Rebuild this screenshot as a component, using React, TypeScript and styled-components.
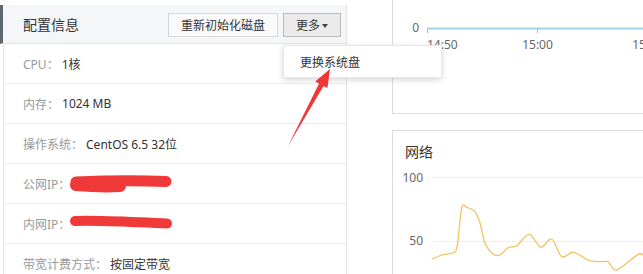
import React, {ReactElement} from 'react';
import styled, {createGlobalStyle} from 'styled-components';

const GlobalStyle = createGlobalStyle`
    html, body {
        margin: 0;
        padding: 0;
        background: #fff;
        overflow: hidden;
    }
    body {
        font-family: "Noto Sans", "Noto Sans CJK SC", sans-serif;
        font-size: 12px;
        color: #333;
    }
`;

const infoRows = [
    {label: 'CPU', value: '1核'},
    {label: '内存', value: '1024 MB'},
    {label: '操作系统', value: 'CentOS 6.5 32位'},
    {label: '公网IP', value: null, scribble: 'thick'},
    {label: '内网IP', value: null, scribble: 'thin'},
    {label: '带宽计费方式', value: '按固定带宽'},
];

// network chart, svg coords relative to chart origin
const netPoints: [number, number][] = [
    [38.7, 97.3], [48.7, 93], [60, 90.7], [64, 84.7], [68.7, 46.3],
    [73.7, 45.3], [82, 49.7], [87, 61], [92, 81], [100, 92], [107, 93],
    [115, 85.7], [123.7, 83.7], [136.3, 72.3], [147.7, 85.3], [158.7, 77],
    [168.7, 94.7], [180.3, 90.3], [197, 98.7], [210.3, 99.7], [215.3, 99.7],
    [223.7, 108], [245.3, 92.3], [252, 95],
];

function smoothPath(pts: [number, number][]): string {
    let d = `M${pts[0][0]},${pts[0][1]}`;
    for (let i = 0; i < pts.length - 1; i++) {
        const p0 = pts[i - 1] || pts[i];
        const p1 = pts[i];
        const p2 = pts[i + 1];
        const p3 = pts[i + 2] || p2;
        const c1x = p1[0] + (p2[0] - p0[0]) / 6;
        const c1y = p1[1] + (p2[1] - p0[1]) / 6;
        const c2x = p2[0] - (p3[0] - p1[0]) / 6;
        const c2y = p2[1] - (p3[1] - p1[1]) / 6;
        d += ` C${c1x.toFixed(1)},${c1y.toFixed(1)} ${c2x.toFixed(1)},${c2y.toFixed(1)} ${p2[0]},${p2[1]}`;
    }
    return d;
}

function Scribble({kind}: {kind: string}): ReactElement {
    return (
        <ScribbleSvg width="106" height="20" viewBox="0 0 106 20">
            {kind === 'thick' ? (
                <>
                    <path d="M8,8 C30,7 60,6 98,7.5" stroke="#f03a3a" strokeWidth="11" strokeLinecap="round" fill="none" />
                    <path d="M8,11 C20,12 35,13 52,12" stroke="#f03a3a" strokeWidth="12" strokeLinecap="round" fill="none" />
                </>
            ) : (
                <path d="M7,7 C30,6 60,8 99,9.5" stroke="#f03a3a" strokeWidth="10" strokeLinecap="round" fill="none" />
            )}
        </ScribbleSvg>
    );
}

export default function App(): ReactElement {
    return (
        <Page>
            <GlobalStyle />
            <ConfigPanel>
                <PanelHeader>
                    <PanelTitle>配置信息</PanelTitle>
                    <Actions>
                        <Button>重新初始化磁盘</Button>
                        <MenuWrap>
                            <Button $active>
                                更多<Caret />
                            </Button>
                            <Menu>
                                <MenuItem>更换系统盘</MenuItem>
                            </Menu>
                        </MenuWrap>
                    </Actions>
                </PanelHeader>
                <PanelBody>
                    {infoRows.map((row) => (
                        <InfoRow key={row.label}>
                            <Label>{row.label}：</Label>
                            {row.value ? <Value>{row.value}</Value> : <Scribble kind={row.scribble || ''} />}
                        </InfoRow>
                    ))}
                </PanelBody>
            </ConfigPanel>

            <ChartColumn>
                <CpuCard>
                    <svg width="250" height="113" viewBox="0 0 250 113">
                        <text x="26" y="32" textAnchor="end" fontSize="12" fill="#666">0</text>
                        <line x1="34" y1="28.5" x2="250" y2="28.5" stroke="#9dd5e4" strokeWidth="2" />
                        <line x1="34.5" y1="28" x2="34.5" y2="33" stroke="#bbb" />
                        <line x1="144.5" y1="28" x2="144.5" y2="33" stroke="#bbb" />
                        <text x="34" y="49" fontSize="12" fill="#666">14:50</text>
                        <text x="144.5" y="49" textAnchor="middle" fontSize="12" fill="#666">15:00</text>
                        <text x="254.5" y="49" textAnchor="middle" fontSize="12" fill="#666">15:10</text>
                    </svg>
                </CpuCard>
                <NetCard>
                    <CardTitle>网络</CardTitle>
                    <svg width="250" height="112" viewBox="0 0 250 112">
                        <text x="30" y="19.5" textAnchor="end" fontSize="12" fill="#666">100</text>
                        <line x1="39" y1="15.5" x2="250" y2="15.5" stroke="#eee" />
                        <text x="30" y="83" textAnchor="end" fontSize="12" fill="#666">50</text>
                        <line x1="39" y1="79.5" x2="250" y2="79.5" stroke="#eee" />
                        <path d={smoothPath(netPoints)} stroke="#f2c360" strokeWidth="1.3" fill="none" />
                    </svg>
                </NetCard>
            </ChartColumn>

            <Arrow width="60" height="90" viewBox="280 62 60 90">
                <polygon points="330,69 315.2,81.4 319.1,83.5 288,146 323.5,86 327.4,88.1" fill="#f23535" />
            </Arrow>
        </Page>
    );
}

const Page = styled.div`
    position: relative;
    display: flex;
    flex-flow: row nowrap;
    align-items: flex-start;
    width: 643px;
    height: 274px;
    overflow: hidden;
`;

const ConfigPanel = styled.section`
    width: 347px;
    flex: none;
    margin-top: 5px;
`;

const PanelHeader = styled.header`
    box-sizing: border-box;
    display: flex;
    align-items: center;
    justify-content: space-between;
    height: 39px;
    padding: 2px 5px 0 20px;
    background: #f5f6f7;
    border-left: 3px solid #5e6771;
    border-right: 1px solid #e4e4e4;
    border-bottom: 1px solid #e4e4e4;
`;

const PanelTitle = styled.h3`
    margin: 0;
    font-size: 14px;
    font-weight: normal;
    color: #333;
    line-height: 20px;
`;

const Actions = styled.div`
    display: flex;
    gap: 5px;
`;

const MenuWrap = styled.div`
    position: relative;
`;

const Button = styled.button<{$active?: boolean}>`
    box-sizing: border-box;
    display: flex;
    align-items: center;
    height: 24px;
    padding: 0 12px;
    font-family: inherit;
    font-size: 12px;
    color: #333;
    background: ${({$active}) => ($active ? '#ebebeb' : '#fafafa')};
    border: 1px solid ${({$active}) => ($active ? '#b9b9b9' : '#d6d6d6')};
    border-radius: 0;
    cursor: pointer;
`;

const Caret = styled.span`
    display: inline-block;
    width: 0;
    height: 0;
    margin-left: 2px;
    margin-top: 2px;
    border-left: 3.5px solid transparent;
    border-right: 3.5px solid transparent;
    border-top: 4px solid #444;
`;

const Menu = styled.div`
    position: absolute;
    top: calc(100% + 8px);
    left: 0;
    z-index: 2;
    box-sizing: border-box;
    width: 159px;
    height: 33px;
    display: flex;
    align-items: center;
    background: #fff;
    border: 1px solid #e8e8e8;
    box-shadow: 0 2px 6px rgba(0, 0, 0, 0.16);
`;

const MenuItem = styled.div`
    padding-left: 16px;
    font-size: 12px;
    color: #333;
    white-space: nowrap;
`;

const PanelBody = styled.div`
    margin-left: 3px;
    border-left: 1px solid #e4e4e4;
    border-right: 1px solid #e4e4e4;
`;

const InfoRow = styled.div`
    box-sizing: border-box;
    display: flex;
    align-items: center;
    height: 40px;
    padding-left: 19px;
    border-bottom: 1px solid #ececec;
    white-space: nowrap;
`;

const Label = styled.span`
    color: #999;
`;

const Value = styled.span`
    margin-left: 3px;
    color: #333;
`;

const ScribbleSvg = styled.svg`
    display: block;
    margin-left: -2px;
`;

const ChartColumn = styled.div`
    flex: 1;
    margin-left: 45px;
    display: flex;
    flex-direction: column;
`;

const CpuCard = styled.div`
    box-sizing: border-box;
    height: 114px;
    border-left: 1px solid #dcdcdc;
    border-bottom: 1px solid #dcdcdc;

    svg {
        display: block;
    }
`;

const NetCard = styled.div`
    margin-top: 16px;
    border-left: 1px solid #dcdcdc;
    border-top: 1px solid #dcdcdc;
    height: 200px;

    svg {
        display: block;
    }
`;

const CardTitle = styled.h4`
    margin: 0;
    padding: 11px 0 0 12px;
    height: 20px;
    font-size: 14px;
    font-weight: normal;
    line-height: 20px;
    color: #333;
`;

const Arrow = styled.svg`
    position: absolute;
    left: 280px;
    top: 62px;
    z-index: 3;
    pointer-events: none;
`;
